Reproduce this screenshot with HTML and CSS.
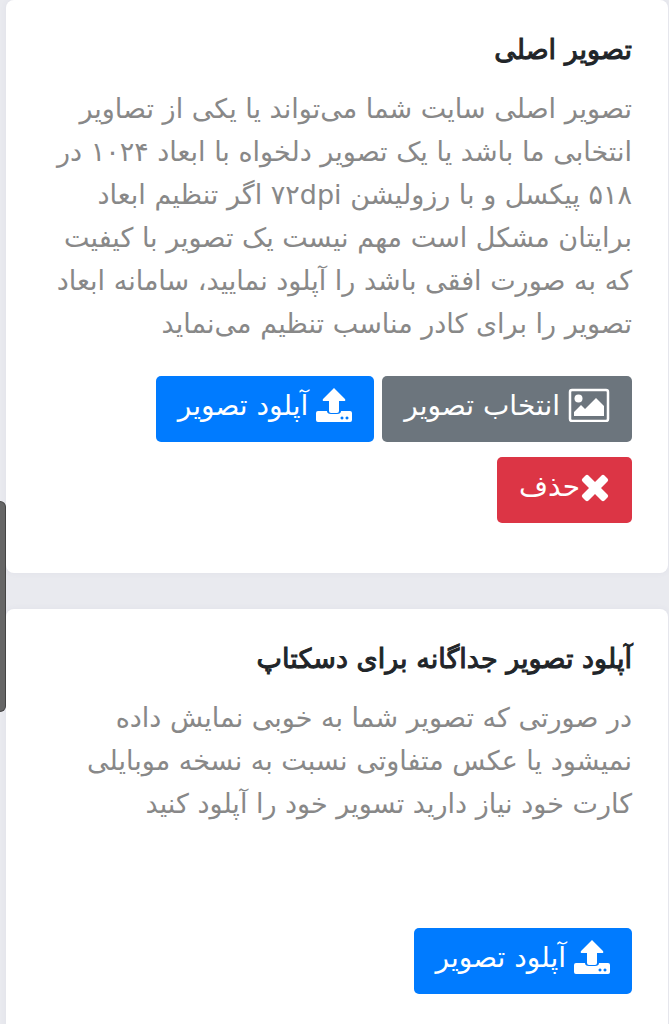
FILE: index.html
```html
<!DOCTYPE html>
<html lang="fa" dir="rtl">
<head>
    <meta charset="UTF-8">
    <meta name="viewport" content="width=device-width, initial-scale=1.0">
    <title>تصویر اصلی</title>
    <link rel="stylesheet" href="styles.css">
</head>
<body>
    <div class="scroll-thumb"></div>
    <main class="cards">
        <section class="card">
            <h2>تصویر اصلی</h2>
            <p>
                تصویر اصلی سایت شما می‌تواند یا یکی از تصاویر
                انتخابی ما باشد یا یک تصویر دلخواه با ابعاد ۱۰۲۴ در
                ۵۱۸ پیکسل و با رزولیشن ۷۲dpi اگر تنظیم ابعاد
                برایتان مشکل است مهم نیست یک تصویر با کیفیت
                که به صورت افقی باشد را آپلود نمایید، سامانه ابعاد
                تصویر را برای کادر مناسب تنظیم می‌نماید
            </p>
            <div class="buttons">
                <button type="button" class="btn select">
                    <svg width="42" height="34" viewBox="0 0 42 34" aria-hidden="true">
                        <rect x="2" y="2" width="38" height="31" rx="2" fill="none" stroke="currentColor" stroke-width="2.500"/>
                        <circle cx="10.500" cy="10.500" r="4"/>
                        <path d="M6 28v-4l7-7 4 4 11-11 8 8v10z"/>
                    </svg>
                    <span>انتخاب تصویر</span>
                </button>
                <button type="button" class="btn upload">
                    <svg width="36" height="34" viewBox="0 0 36 34" aria-hidden="true">
                        <path d="M18 0l11 11q1 2-1 2h-5v10q0 2-2 2h-6q-2 0-2-2v-10H8q-2 0-1-2z"/>
                        <path fill-rule="evenodd" d="M2 23h9q0 3 4 3h6q4 0 4-3h9q2 0 2 2v7q0 2-2 2H2q-2 0-2-2v-7q0-2 2-2zM26 28.500a1.500 1.500 0 1 0 .01 0zM31 28.500a1.500 1.500 0 1 0 .01 0z"/>
                    </svg>
                    <span>آپلود تصویر</span>
                </button>
                <button type="button" class="btn delete">
                    <svg width="30" height="28" viewBox="0 0 30 28" aria-hidden="true">
                        <path d="M5.500 1.500q1.500-1.500 3 0l6.500 6.500 6.500-6.500q1.500-1.500 3 0l3 3q1.500 1.500 0 3L21 14l6.500 6.500q1.500 1.500 0 3l-3 3q-1.500 1.500-3 0L15 20l-6.500 6.500q-1.500 1.500-3 0l-3-3q-1.500-1.500 0-3L9 14 2.500 7.500q-1.500-1.500 0-3z"/>
                    </svg>
                    <span>حذف</span>
                </button>
            </div>
        </section>

        <section class="card">
            <h2>آپلود تصویر جداگانه برای دسکتاپ</h2>
            <p>
                در صورتی که تصویر شما به خوبی نمایش داده
                نمیشود یا عکس متفاوتی نسبت به نسخه موبایلی
                کارت خود نیاز دارید تسویر خود را آپلود کنید
            </p>
            <div class="preview"></div>
            <div class="buttons">
                <button type="button" class="btn upload">
                    <svg width="36" height="34" viewBox="0 0 36 34" aria-hidden="true">
                        <path d="M18 0l11 11q1 2-1 2h-5v10q0 2-2 2h-6q-2 0-2-2v-10H8q-2 0-1-2z"/>
                        <path fill-rule="evenodd" d="M2 23h9q0 3 4 3h6q4 0 4-3h9q2 0 2 2v7q0 2-2 2H2q-2 0-2-2v-7q0-2 2-2zM26 28.500a1.500 1.500 0 1 0 .01 0zM31 28.500a1.500 1.500 0 1 0 .01 0z"/>
                    </svg>
                    <span>آپلود تصویر</span>
                </button>
            </div>
        </section>
    </main>
</body>
</html>
```

FILE: styles.css
```css
* {
    box-sizing: border-box;
}
body {
    font-family: "DejaVu Sans", sans-serif;
    background-color: #e9eaef;
    margin: 0;
}
.scroll-thumb {
    position: fixed;
    left: 0;
    top: 501px;
    width: 6px;
    height: 211px;
    background-color: #666;
    border: 1px solid #444;
    border-left: none;
    border-radius: 0 6px 6px 0;
}
.cards {
    display: flex;
    flex-direction: column;
    gap: 36px;
    padding: 0 1px 0 6px;
}
.card {
    background-color: #fff;
    border-radius: 8px;
    padding: 28px 36px 50px;
    box-shadow: 0 0 6px rgba(80,90,130,0.06);
}
.card h2 {
    margin: 0 0 16px;
    font-size: 27px;
    font-weight: normal;
    line-height: 43px;
    color: #212529;
    -webkit-text-stroke: 1px #212529;
}
.card p {
    margin: 0 0 31px;
    font-size: 27px;
    line-height: 43px;
    color: #888;
}
.preview {
    height: 72px;
}
.buttons {
    display: flex;
    flex-wrap: wrap;
    gap: 15px 8px;
}
.btn {
    display: flex;
    align-items: flex-start;
    gap: 8px;
    height: 66px;
    padding: 12px 22px;
    border: none;
    border-radius: 5px;
    color: #fff;
    font-family: inherit;
    font-size: 28px;
    line-height: 36px;
    cursor: pointer;
}
.btn svg {
    fill: currentColor;
}
.btn.select {
    background-color: #6c757d;
}
.btn.upload {
    background-color: #007bff;
}
.btn.delete {
    background-color: #dc3545;
    gap: 0;
}
.btn.delete svg {
    margin-top: 5px;
}
```
